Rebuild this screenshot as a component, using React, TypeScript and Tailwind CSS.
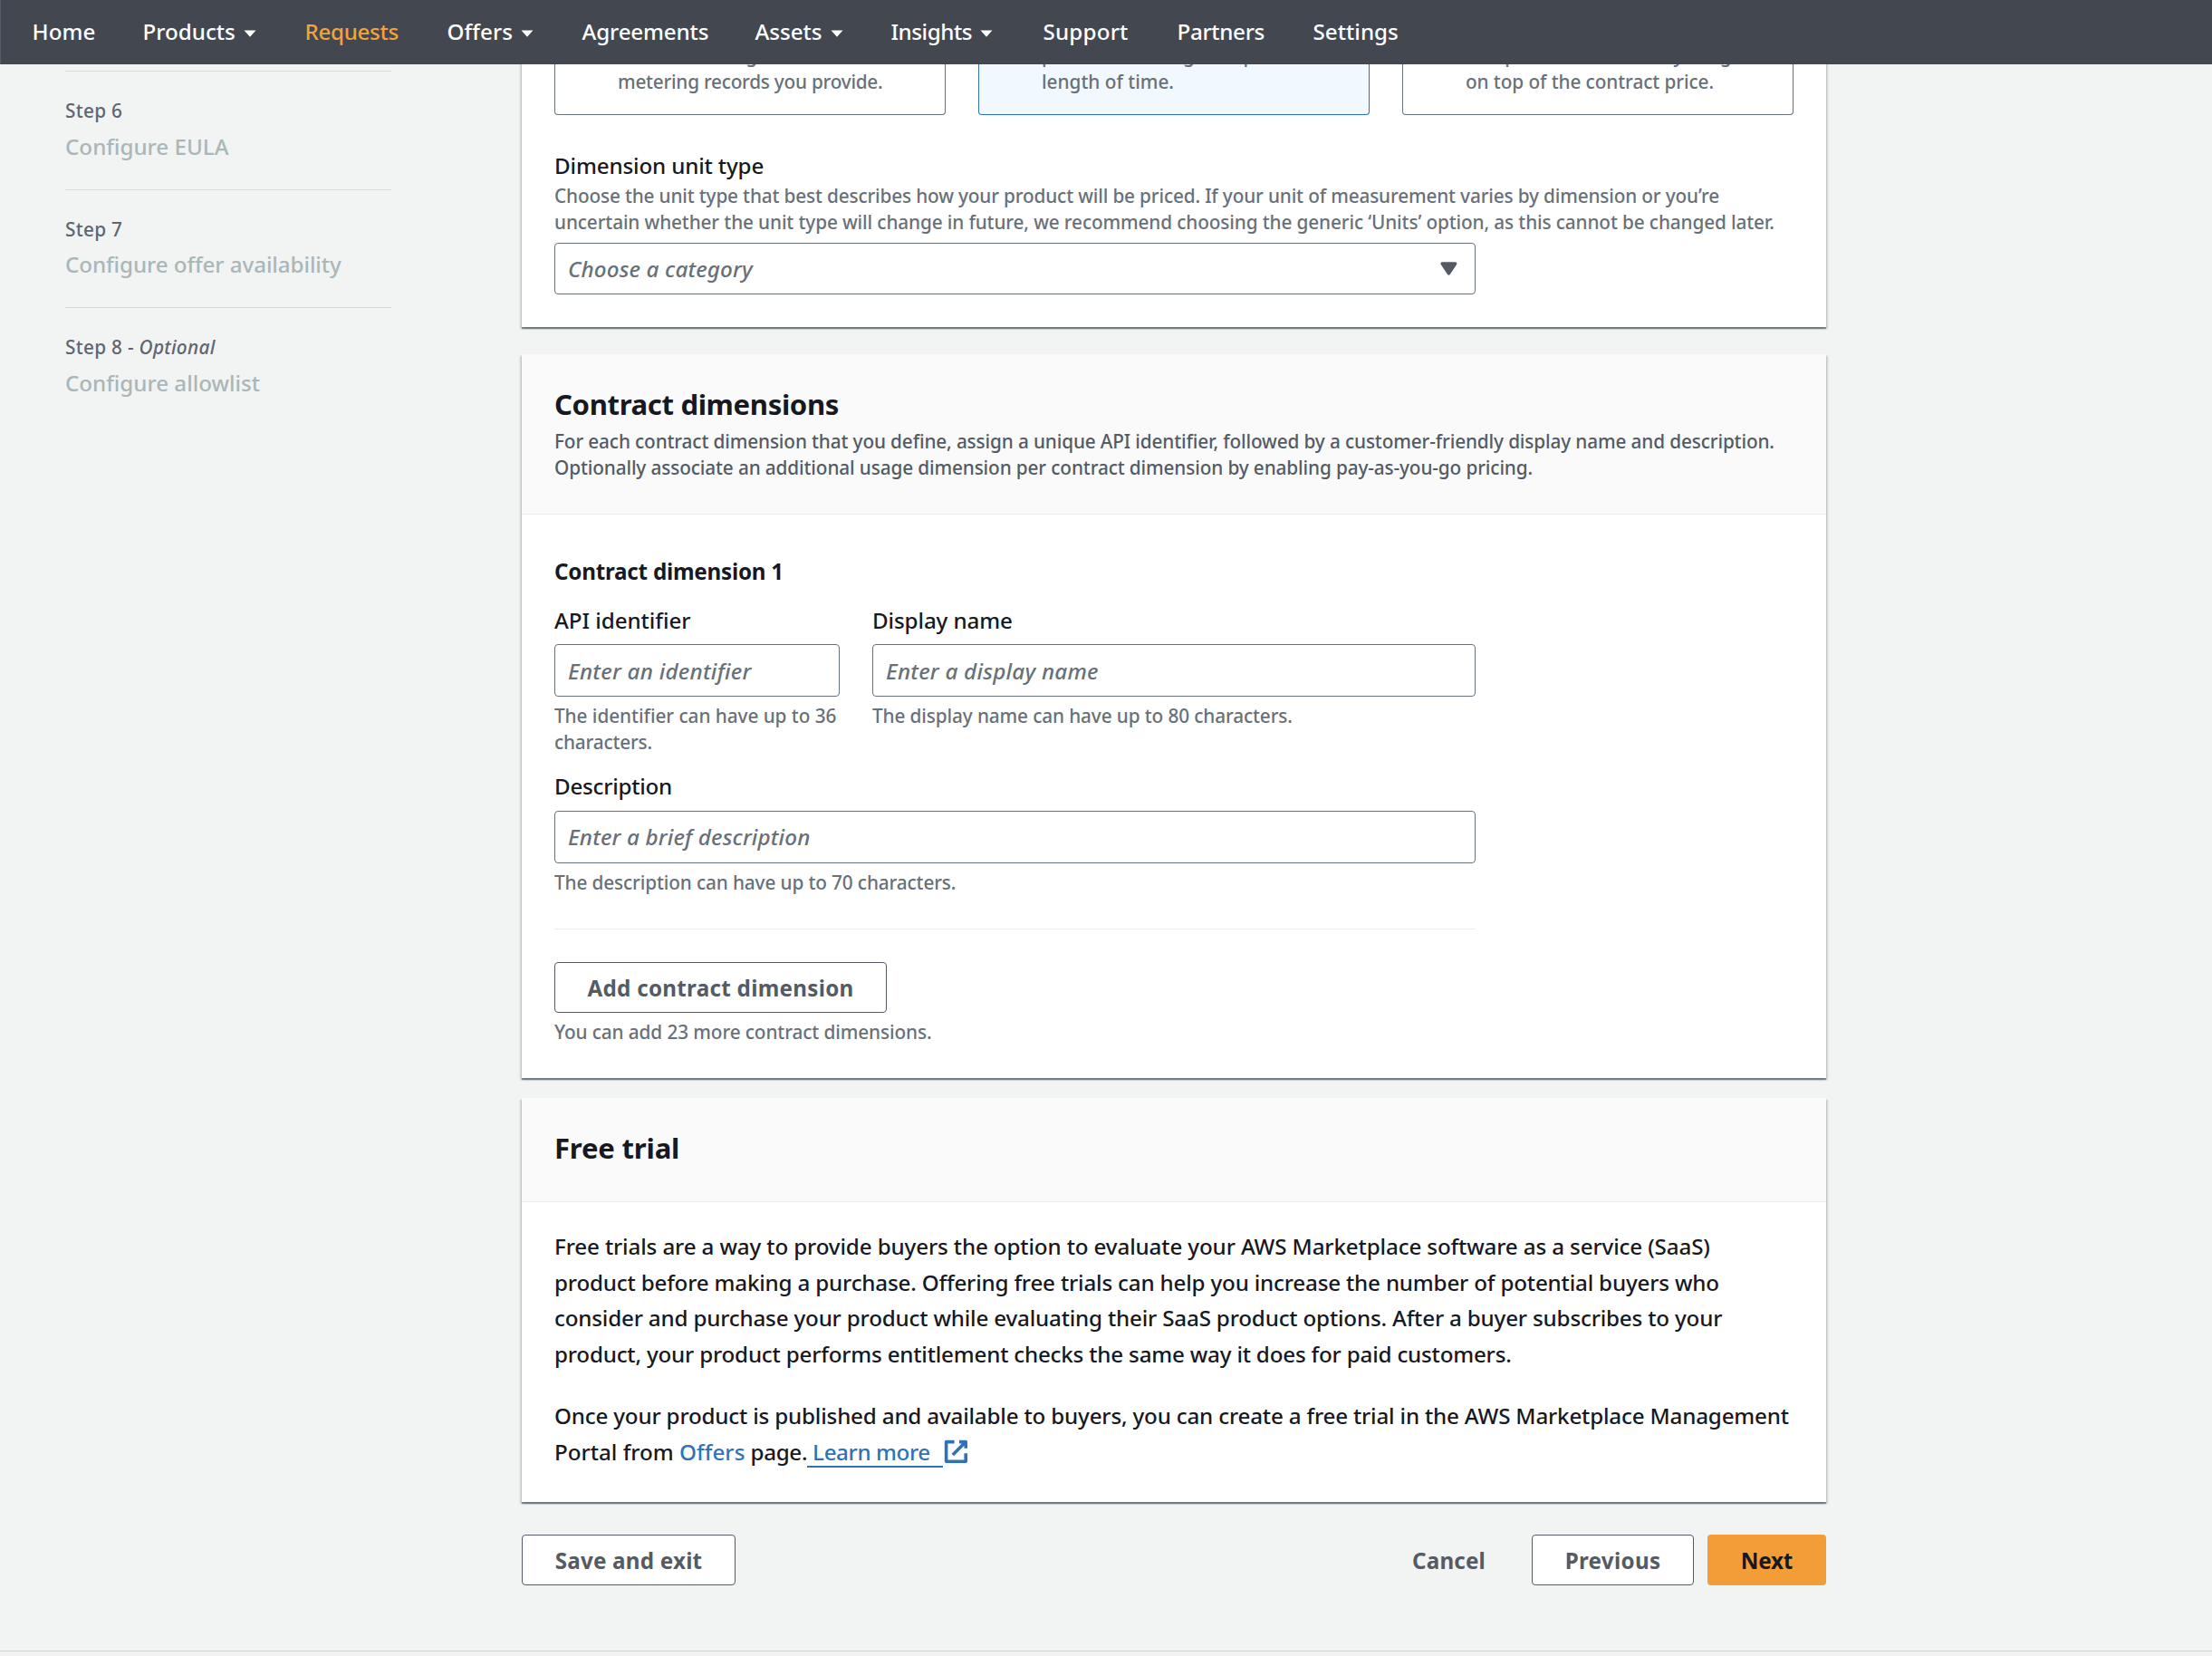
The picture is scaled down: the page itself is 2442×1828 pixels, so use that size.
import type { ReactNode } from 'react';

type Kids = { children: ReactNode; className?: string };

function T({ children, className = '' }: Kids) {
  return <span className={`inline-block whitespace-pre ${className}`}>{children}</span>;
}

function Line({ children, className = '' }: Kids) {
  return (
    <span className="block">
      <T className={className}>{children}</T>
    </span>
  );
}

const nav = [
  { label: 'Home', caret: false, cls: 'w-[122px] tracking-[0.08px]' },
  { label: 'Products', caret: true, cls: 'w-[179px] tracking-[0px]' },
  { label: 'Requests', caret: false, cls: 'w-[157px] tracking-[-0.32px] text-[#f2a33a]' },
  { label: 'Offers', caret: true, cls: 'w-[149px] tracking-[0.08px]' },
  { label: 'Agreements', caret: false, cls: 'w-[191px] tracking-[-0.15px]' },
  { label: 'Assets', caret: true, cls: 'w-[150px] tracking-[-0.04px]' },
  { label: 'Insights', caret: true, cls: 'w-[168px] tracking-[-0.46px]' },
  { label: 'Support', caret: false, cls: 'w-[148px] tracking-[0.18px]' },
  { label: 'Partners', caret: false, cls: 'w-[150px] tracking-[-0.33px]' },
  { label: 'Settings', caret: false, cls: 'w-[120px] tracking-[0.03px]' },
];

function NavBar() {
  return (
    <nav className="sticky top-0 z-10 -mb-[25px] flex h-[71px] items-center border-l border-[#565b66] bg-[#434750] pb-[2px] pl-[34.5px] text-white">
      {nav.map((n) => (
        <a key={n.label} className={`flex shrink-0 items-center ${n.cls}`}>
          <T>{n.label}</T>
          {n.caret && (
            <svg className="ml-[9px] mt-[5px] h-[8px] w-[14px]" viewBox="0 0 14 8" fill="currentColor">
              <path d="M0.5 0.5h13L7 7.8z" />
            </svg>
          )}
        </a>
      ))}
    </nav>
  );
}

function Step({ step, optional, title, className }: { step: string; optional?: boolean; title: string; className: string }) {
  return (
    <li className="h-[130.5px] border-t border-[#d5dbdb] pt-[29px]">
      <div className="text-[20.75px] leading-[29px] tracking-[0.3px] text-[#5f6670]">
        <T>
          {step}
          {optional && <> - <i>Optional</i></>}
        </T>
      </div>
      <div className="mt-[4.5px] leading-[40px] text-[#aab7b8]">
        <T className={className}>{title}</T>
      </div>
    </li>
  );
}

function Tile({ first, last, selected, className }: { first: string; last: string; selected?: boolean; className: string }) {
  return (
    <div
      className={`h-[81px] rounded-b-[4px] border border-t-0 pl-[69px] pt-px text-[20.75px] leading-[29px] text-[#687078] ${
        selected ? 'border-[#2e73b8] bg-[#f1f8fe]' : 'border-[#687078] bg-white'
      }`}
    >
      <Line>{first}</Line>
      <Line className={className}>{last}</Line>
    </div>
  );
}

function Card({ children, className = '' }: Kids) {
  return (
    <section
      className={`bg-white shadow-[0_2px_1px_0_rgba(0,28,36,0.4),2px_2px_2px_0_rgba(0,28,36,0.15),-2px_2px_2px_0_rgba(0,28,36,0.15)] ${className}`}
    >
      {children}
    </section>
  );
}

function Hint({ children, className = '' }: Kids) {
  return <p className={`text-[20.75px] leading-[29px] text-[#687078] ${className}`}>{children}</p>;
}

function Input({ children, className = '' }: Kids) {
  return (
    <div className={`flex items-center rounded-[4px] border border-[#687078] bg-white pl-[14px] italic text-[#687078] ${className}`}>
      <T>{children}</T>
    </div>
  );
}

function Button({ children, className = '' }: Kids) {
  return (
    <button className={`flex h-[56px] items-center justify-center rounded-[4px] pt-px font-bold ${className}`}>
      <T>{children}</T>
    </button>
  );
}

export default function App() {
  return (
    <div className="h-[1828px] w-[2442px] overflow-hidden bg-[#f2f3f3] font-['Noto_Sans',sans-serif] text-[24.2px] font-medium leading-[40px] text-[#16191f]">
      <NavBar />
      <div className="flex pl-[72px]">
        <ol className="w-[360px] shrink-0 pt-[32px]">
          <Step step="Step 6" title="Configure EULA" className="tracking-[0px]" />
          <Step step="Step 7" title="Configure offer availability" className="tracking-[-0.08px]" />
          <Step step="Step 8" optional title="Configure allowlist" className="tracking-[-0.02px]" />
        </ol>
        <main className="ml-[144px] w-[1440px] shrink-0">
          <Card className="px-[36px] pb-[36px]">
            <div className="grid grid-cols-3 gap-[36px]">
              <Tile first="costs according to the" last="metering records you provide." className="tracking-[-0.24px]" />
              <Tile first="product covering the specified" last="length of time." selected className="tracking-[0px]" />
              <Tile first="and provide for monthly usage" last="on top of the contract price." className="tracking-[-0.08px]" />
            </div>
            <div className="mt-[36px]"><T className="tracking-[-0.15px]">Dimension unit type</T></div>
            <Hint className="-mt-px">
              <Line className="tracking-[-0.149px]">Choose the unit type that best describes how your product will be priced. If your unit of measurement varies by dimension or you’re</Line>
              <Line className="tracking-[-0.118px]">uncertain whether the unit type will change in future, we recommend choosing the generic ‘Units’ option, as this cannot be changed later.</Line>
            </Hint>
            <div className="mt-[8px] flex h-[57px] w-[1017px] items-center justify-between rounded-[4px] border border-[#687078] pl-[14px] pr-[14px] italic text-[#687078]">
              <T className="tracking-[0.14px]">Choose a category</T>
              <svg className="h-[28.8px] w-[28.8px]" viewBox="0 0 16 16" fill="#545b64" stroke="#545b64" strokeWidth="2" strokeLinejoin="round">
                <path d="M4 5h8l-4 6z" />
              </svg>
            </div>
          </Card>

          <Card className="mt-[30px] pb-[36px]">
            <header className="h-[177px] border-b border-[#eaeded] bg-[#fafafa] px-[36px] pt-[35px]">
              <h2 className="text-[31.1px] font-bold"><T className="tracking-[-0.36px]">Contract dimensions</T></h2>
              <p className="mt-[7px] text-[20.75px] leading-[29px] text-[#545b64]">
                <Line className="tracking-[-0.126px]">For each contract dimension that you define, assign a unique API identifier, followed by a customer-friendly display name and description.</Line>
                <Line className="tracking-[-0.12px]">Optionally associate an additional usage dimension per contract dimension by enabling pay-as-you-go pricing.</Line>
              </p>
            </header>
            <div className="px-[36px] pt-[43px]">
              <h3 className="font-bold"><T className="tracking-[-0.23px]">Contract dimension 1</T></h3>
              <div className="mt-[14px] flex gap-[36px]">
                <div className="w-[315px]">
                  <div><T className="tracking-[-0.05px]">API identifier</T></div>
                  <Input className="mt-[6px] h-[58px] pt-px tracking-[0.26px]">Enter an identifier</Input>
                  <Hint className="mt-[7px]">
                    <Line className="tracking-[-0.04px]">The identifier can have up to 36</Line>
                    <Line className="tracking-[-0.18px]">characters.</Line>
                  </Hint>
                </div>
                <div className="w-[666px]">
                  <div><T className="tracking-[-0.12px]">Display name</T></div>
                  <Input className="mt-[6px] h-[58px] pt-px tracking-[0.24px]">Enter a display name</Input>
                  <Hint className="mt-[7px]"><Line className="tracking-[-0.11px]">The display name can have up to 80 characters.</Line></Hint>
                </div>
              </div>
              <div className="mt-[14px]"><T className="tracking-[-0.26px]">Description</T></div>
              <Input className="mt-[7px] h-[58px] w-[1017px] tracking-[0.16px]">Enter a brief description</Input>
              <Hint className="mt-[7px]"><Line className="tracking-[-0.12px]">The description can have up to 70 characters.</Line></Hint>
              <div className="mt-[36px] h-px w-[1017px] bg-[#eaeded]" />
              <Button className="mt-[36px] w-[367px] border border-[#545b64] tracking-[0.28px] text-[#545b64]">Add contract dimension</Button>
              <Hint className="mt-[7px]"><Line className="tracking-[-0.1px]">You can add 23 more contract dimensions.</Line></Hint>
            </div>
          </Card>

          <Card className="mt-[22px] h-[446px]">
            <header className="h-[115px] border-b border-[#eaeded] bg-[#fafafa] px-[36px] pt-[35px]">
              <h2 className="text-[31.1px] font-bold"><T className="tracking-[-0.2px]">Free trial</T></h2>
            </header>
            <div className="px-[36px] pt-[29px] leading-[39.6px]">
              <p>
                <Line className="tracking-[-0.136px]">Free trials are a way to provide buyers the option to evaluate your AWS Marketplace software as a service (SaaS)</Line>
                <Line className="tracking-[-0.184px]">product before making a purchase. Offering free trials can help you increase the number of potential buyers who</Line>
                <Line className="tracking-[-0.184px]">consider and purchase your product while evaluating their SaaS product options. After a buyer subscribes to your</Line>
                <Line className="tracking-[-0.198px]">product, your product performs entitlement checks the same way it does for paid customers.</Line>
              </p>
              <p className="mt-[29px]">
                <Line className="tracking-[-0.183px]">Once your product is published and available to buyers, you can create a free trial in the AWS Marketplace Management</Line>
                <span className="flex">
                  <T>Portal from </T>
                  <T className="tracking-[0.05px] text-[#2e73b8]">Offers</T>
                  <T className="tracking-[-0.3px]"> page.</T>
                  <a className="flex text-[#2e73b8]">
                    <span className="h-[37px] w-[150px] border-b-2 border-[#2e73b8]">
                      <T className="tracking-[-0.4px]"> Learn more</T>
                    </span>
                    <svg className="mt-[5px] h-[28.8px] w-[28.8px]" viewBox="0 0 16 16" fill="none" stroke="currentColor" strokeWidth="2" strokeLinejoin="round">
                      <path d="M10 2h4v4M6 10l8-8M14 9.05V14H2V2h5" />
                    </svg>
                  </a>
                </span>
              </p>
            </div>
          </Card>

          <div className="mt-[36px] flex text-[#545b64]">
            <Button className="w-[236px] border border-[#545b64] bg-white tracking-[0.22px]">Save and exit</Button>
            <Button className="ml-auto mr-[51px] tracking-[0.18px]">Cancel</Button>
            <Button className="mr-[15px] w-[179px] border border-[#545b64] bg-white tracking-[0.3px]">Previous</Button>
            <Button className="w-[131px] bg-[#f29d38] tracking-[-0.2px] text-[#16191f]">Next</Button>
          </div>
        </main>
      </div>
      <footer className="mt-[72px] h-[6px] border-t border-[#cfd3d3] bg-[#f2f2f2]" />
    </div>
  );
}
